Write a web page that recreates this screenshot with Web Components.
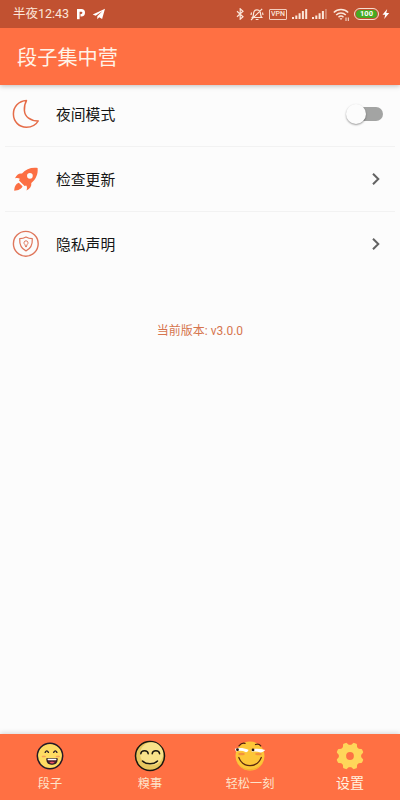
<!DOCTYPE html>
<html lang="zh-CN">
<head>
<meta charset="UTF-8">
<meta name="viewport" content="width=device-width, initial-scale=1.0">
<title>段子集中营</title>
<style>
    html, body {
        margin: 0;
        height: 100%;
    }

    body {
        font-family: Roboto, 'Noto Sans CJK SC', sans-serif;
        background-color: #fcfcfc;
        overflow: hidden;
    }
</style>
</head>
<body>

<settings-page>
    <status-bar slot="top" time="半夜12:43"></status-bar>
    <app-bar slot="top">段子集中营</app-bar>

    <setting-row>
        <svg slot="icon" width="28" height="30" viewBox="0 0 28 30" fill="none" stroke="#e56c48" stroke-width="1.5" stroke-linejoin="round">
            <path d="M14.500 1.600C6.500 2 1.300 8 1.400 15c.1 8 6 13.200 13 13.200 5.200 0 9.600-2.300 11.800-6.200C18.500 22 12.800 18 12.400 11.500 12.200 7.500 12.900 4.200 14.500 1.600z"/>
        </svg>
        夜间模式
        <toggle-switch slot="action"></toggle-switch>
    </setting-row>
    <setting-row>
        <svg slot="icon" width="28" height="28" viewBox="0 0 28 28" fill="#fc6f43">
            <path fill-rule="evenodd" d="M25.600 3C19 2.200 13.900 4.200 10 8.500 6.500 8.100 4.700 9.800 3 13.300c2-.7 3.600-.5 4.800.5L7 15.500l5.600 5.600 1.600-.7c1 1.400 1 3.100.3 5 3.700-1.700 5.200-4 4.800-7.300C24 14 26.200 9.200 25.600 3zM17.900 8a2.850 2.850 0 1 1 0 5.700 2.850 2.850 0 0 1 0-5.700z"/>
            <path d="M6.800 17.700c-2.700.8-4.500 3.700-4.600 8.100 4.200-.2 7.500-2 8.300-4.500z"/>
        </svg>
        检查更新
        <chevron-icon slot="action"></chevron-icon>
    </setting-row>
    <setting-row>
        <svg slot="icon" width="28" height="28" viewBox="0 0 28 28" fill="none" stroke="#df765b" stroke-width="1.200" stroke-linejoin="round">
            <circle cx="13.800" cy="13.800" r="12.400" stroke-width="1.400"/>
            <path d="M14 7c2 1.200 4 1.700 6.300 1.700.3 5.500-1.500 9.900-6.300 12.200-4.800-2.300-6.600-6.700-6.300-12.200 2.300 0 4.300-.5 6.300-1.700z"/>
            <path stroke-width="1" d="M14 10.800a2 2 0 0 1 1.200 3.600L14.200 17h-.4l-1-2.600A2 2 0 0 1 14 10.800z"/>
        </svg>
        隐私声明
        <chevron-icon slot="action"></chevron-icon>
    </setting-row>

    <version-label>当前版本: v3.0.0</version-label>

    <tab-bar slot="bottom">
        <tab-item>
            <svg slot="icon" width="32" height="32" viewBox="0 0 32 32" fill="none" stroke-linecap="round">
                <circle cx="16" cy="16" r="12.700" fill="#fedc62" stroke="#251a26" stroke-width="1.500"/>
                <path d="M11.200 12.300q1.600-2.800 3.200 0M19.700 12.300q1.600-2.800 3.200 0" stroke="#251a26" stroke-width="1.400"/>
                <path d="M8.500 16.500h2.600M22.500 16.500h2.600" stroke="#f4a25a" stroke-width="1.500"/>
                <path d="M12.800 18.800h10.400c0 3.400-2 5.400-5.200 5.400s-5.200-2-5.200-5.400z" fill="#58202d" stroke="#251a26" stroke-width="1.200" stroke-linejoin="round"/>
                <path d="M14.200 19.500h7.600" stroke="#fff" stroke-width="1.300"/>
                <path d="M15.300 22.500q2.700-1.600 5.400 0-2.500 1.900-5.400 0z" fill="#ef5364"/>
            </svg>
            段子
        </tab-item>
        <tab-item>
            <svg slot="icon" width="32" height="32" viewBox="0 0 32 32" fill="none" stroke="#1b180f" stroke-linecap="round">
                <circle cx="16" cy="16" r="14.500" fill="#e7c75f" stroke-width="1.500"/>
                <ellipse cx="17.600" cy="13.800" rx="11.500" ry="11.500" fill="#f8e28a" stroke="none"/>
                <path d="M6.800 13.800c.4-4 7-4 7.400 0M18.200 13.800c.4-4 7-4 7.400 0M8.500 21c3.700 3.800 11.300 3.800 15 0" stroke-width="1.500"/>
            </svg>
            糗事
        </tab-item>
        <tab-item>
            <svg slot="icon" width="32" height="32" viewBox="0 0 32 32" fill="none" stroke-linecap="round">
                <circle cx="16" cy="16" r="14.500" fill="#fdc638"/>
                <path d="M3.200 22.500a14.500 14.500 0 0 0 25.600 0c-4 5-8 6.500-12.800 6.500s-9-1.500-12.800-6.500z" fill="#f4b22f"/>
                <path d="M.8 8.800c4.500-1.300 9-.8 13.700.9-.3 1.600-1.200 2.300-2.500 2.500-3.500-1.600-6.500-1.800-10-.7zM17.300 9.500c4.500-1.200 9-.9 13.900.5-1.300 1.500-3 2.300-4.700 2.500-3-1-5.500-1.200-8.500-.6z" fill="#fff"/>
                <path d="M5 5.800C6.600 3.800 9 2.800 11 3.300M21.500 4.500c2-.7 4-.2 5.200 1.300" stroke="#50210f" stroke-width="1.300"/>
                <circle cx="3.500" cy="9.700" r="1.400" fill="#28180e"/>
                <circle cx="19" cy="9.900" r="1.400" fill="#28180e"/>
                <ellipse cx="7.500" cy="14" rx="3.300" ry="1.300" fill="#f4943c"/>
                <ellipse cx="24.500" cy="14" rx="3.300" ry="1.300" fill="#f4943c"/>
                <path d="M4.800 17.500C9 28.300 23 28.300 27.300 17.500" stroke="#5c2a10" stroke-width="1.300"/>
            </svg>
            轻松一刻
        </tab-item>
        <tab-item active>
            <svg slot="icon" width="32" height="32" viewBox="-16 -16 32 32">
                <g fill="#ffd65a">
                    <circle r="11.200"/>
                    <g id="teeth"></g>
                </g>
                <circle r="3.900" fill="#fd7044"/>
            </svg>
            设置
        </tab-item>
    </tab-bar>
</settings-page>

<script>
class SettingsPage extends HTMLElement {

    constructor() {
        super();
        this.shadow = this.attachShadow({mode: 'open'});
        this.render();
    }

    render() {
        this.shadow.innerHTML =
        /*html*/
        `
        <style>
            :host{
                display:flex;
                flex-direction: column;
                height:100vh;
            }

            main{
                flex:1;
                min-height:0;
                margin-top:-3px;
            }
        </style>

        <slot name="top"></slot>
        <main><slot></slot></main>
        <slot name="bottom"></slot>
        `;
    }
}

class StatusBar extends HTMLElement {

    constructor() {
        super();
        this.shadow = this.attachShadow({mode: 'open'});
        this.render();
    }

    render() {
        this.shadow.innerHTML =
        /*html*/
        `
        <style>
            :host{
                display:flex;
                justify-content: space-between;
                align-items: center;
                box-sizing: border-box;
                height:28px;
                padding:0 10px 0 13px;
                background-color:#c15131;
                color:#fbe6da;
                flex:none;
                z-index:2;
            }

            .side{
                display:flex;
                align-items: center;
            }

            .time{
                font-size:12.5px;
                line-height:28px;
                margin-right:7px;
            }

            .vpn{
                box-sizing: border-box;
                width:18px;
                height:11px;
                border:1px solid #f3cdbd;
                border-radius:1px;
                font-size:7px;
                font-weight:500;
                line-height:9.500px;
                text-align: center;
                margin-right:5px;
            }

            .battery{
                box-sizing: border-box;
                width:25px;
                height:12px;
                border:1px solid #f6dfd1;
                border-radius:6px;
                padding:1px;
                margin-right:3px;
            }

            .level{
                height:8px;
                border-radius:4px;
                background-color:#45aa22;
                color:white;
                font-size:7.500px;
                font-weight:700;
                line-height:8.500px;
                text-align: center;
            }

            svg{
                display:block;
            }
        </style>

        <div class="side">
            <span class="time">${this.getAttribute('time')}</span>
            <svg width="10" height="12" viewBox="0 0 10 12" fill="none" stroke="#fff">
                <path d="M2.300 11.200V3" stroke-width="2.600"/>
                <path d="M1 2.400h4.300a2.300 2.300 0 0 1 0 4.800H4.500" stroke-width="2.600"/>
            </svg>
            <svg width="14" height="12" viewBox="0 0 14 12" fill="#fff" style="margin-left:6px">
                <path d="M13 0.800L0.700 6.500l3 1.200L10.500 3 5.300 8.300v3l1.900-2 2.900 1.600z"/>
            </svg>
        </div>
        <div class="side">
            <svg width="9" height="12" viewBox="0 0 9 12" fill="none" stroke="currentColor" stroke-width="1.200" style="margin-right:5px">
                <path d="M1 3.300l6 5.400-2.800 2.500V.8L7 3.300 1 8.700"/>
            </svg>
            <svg width="14" height="13" viewBox="0 0 14 13" fill="none" stroke="currentColor" stroke-width="1.200" style="margin-right:5px">
                <path d="M2.500 9.500C4 8 3 5 4.200 3.300c1.400-2 4.300-2 5.700 0C11 5 10.200 8 11.700 9.500zM5.700 11.500h2.800M12.200.8L1 12M1 7l.5-2.500M13 7l-.5-2.500"/>
            </svg>
            <div class="vpn">VPN</div>
            <svg width="16" height="12" viewBox="0 0 16 12" fill="#fbe6da" style="margin-right:4px">
                <path d="M0 9h2v2H0zM3.300 7.500h2V11h-2zM6.600 5.300h2V11h-2zM9.900 3h2v8h-2zM13.200 1h2v10h-2z"/>
            </svg>
            <svg width="16" height="12" viewBox="0 0 16 12" fill="#fbe6da" style="margin-right:5px">
                <path d="M0 9h2v2H0zM3.300 7.500h2V11h-2zM6.600 5.300h2V11h-2zM9.900 3h2v8h-2z"/>
                <path d="M13.200 1h1.500v10h-1.500z" opacity=".45"/>
            </svg>
            <svg width="17" height="13" viewBox="0 0 17 13" fill="none" stroke="currentColor" stroke-width="1.500" style="margin-right:4px">
                <path d="M.8 4.500c4-4 10.400-4 14.400 0M3.200 7c2.700-2.700 6.900-2.700 9.600 0M5.500 9.200c1.500-1.400 3.500-1.400 5 0"/>
                <path d="M6.500 10.200h3L8 12z" fill="currentColor" stroke="none"/>
                <path d="M13 9.500V13M15.300 9.500V13" stroke-width="1"/>
            </svg>
            <div class="battery"><div class="level">100</div></div>
            <svg width="8" height="12" viewBox="0 0 8 12" fill="#fff">
                <path d="M5.200 1L.5 6.800h2.700L2.200 11l5-6H4.300z"/>
            </svg>
        </div>
        `;
    }
}

class AppBar extends HTMLElement {

    constructor() {
        super();
        this.shadow = this.attachShadow({mode: 'open'});
        this.render();
    }

    render() {
        this.shadow.innerHTML =
        /*html*/
        `
        <style>
            :host{
                display:flex;
                align-items: center;
                box-sizing: border-box;
                height:57px;
                padding:0 17px 0;
                background-color:#ff7043;
                color:#fff3e8;
                font-size:20.200px;
                font-weight:400;
                flex:none;
                z-index:1;
                box-shadow:0 1px 5px rgba(0,0,0,0.25);
            }
        </style>

        <slot></slot>
        `;
    }
}

class SettingRow extends HTMLElement {

    constructor() {
        super();
        this.shadow = this.attachShadow({mode: 'open'});
        this.render();
    }

    render() {
        this.shadow.innerHTML =
        /*html*/
        `
        <style>
            :host{
                display:flex;
                align-items: center;
                box-sizing: border-box;
                height:65px;
                margin:0 5px;
                padding:0 12px 1px 7px;
                border-bottom:1px solid #f2f2f2;
                color:#151515;
                font-size:14.800px;
            }

            :host(:last-of-type){
                border-bottom-color:transparent;
            }

            .icon{
                display:flex;
                width:44px;
            }

            .label{
                flex:1;
            }
        </style>

        <div class="icon"><slot name="icon"></slot></div>
        <div class="label"><slot></slot></div>
        <slot name="action"></slot>
        `;
    }
}

class ToggleSwitch extends HTMLElement {

    constructor() {
        super();
        this.shadow = this.attachShadow({mode: 'open'});
        this.render();
    }

    render() {
        this.shadow.innerHTML =
        /*html*/
        `
        <style>
            :host{
                display:flex;
                align-items: center;
                width:37px;
                height:20px;
            }

            .thumb{
                width:20px;
                height:20px;
                border-radius:50%;
                background-color:#fcfcfc;
                box-shadow:0 1px 2px rgba(0,0,0,0.4);
                z-index:1;
            }

            .track{
                width:27px;
                height:14px;
                margin-left:-10px;
                border-radius:7px;
                background-color:#a3a4a3;
            }
        </style>

        <div class="thumb"></div>
        <div class="track"></div>
        `;
    }
}

class ChevronIcon extends HTMLElement {

    constructor() {
        super();
        this.shadow = this.attachShadow({mode: 'open'});
        this.render();
    }

    render() {
        this.shadow.innerHTML =
        /*html*/
        `
        <style>
            :host{
                display:flex;
                padding-right:3px;
            }
        </style>

        <svg width="8" height="14" viewBox="0 0 8 14" fill="none" stroke="#636363" stroke-width="2">
            <path d="M1 1.800L6.300 7 1 12.200"/>
        </svg>
        `;
    }
}

class VersionLabel extends HTMLElement {

    constructor() {
        super();
        this.shadow = this.attachShadow({mode: 'open'});
        this.render();
    }

    render() {
        this.shadow.innerHTML =
        /*html*/
        `
        <style>
            :host{
                display:block;
                margin-top:44px;
                line-height:20px;
                text-align: center;
                font-size:12px;
                color:#d6754e;
            }
        </style>

        <slot></slot>
        `;
    }
}

class TabBar extends HTMLElement {

    constructor() {
        super();
        this.shadow = this.attachShadow({mode: 'open'});
        this.render();
    }

    render() {
        this.shadow.innerHTML =
        /*html*/
        `
        <style>
            :host{
                display:grid;
                grid-template-columns: repeat(4, 1fr);
                height:66px;
                background-color:#ff7043;
                box-shadow:0 -1px 5px rgba(0,0,0,0.15);
                flex:none;
            }
        </style>

        <slot></slot>
        `;
    }
}

class TabItem extends HTMLElement {

    constructor() {
        super();
        this.shadow = this.attachShadow({mode: 'open'});
        this.render();
    }

    render() {
        this.shadow.innerHTML =
        /*html*/
        `
        <style>
            :host{
                display:flex;
                flex-direction: column;
                align-items: center;
                padding-top:6px;
                font-size:12.200px;
                color:#fde3ca;
            }

            :host([active]){
                font-size:14px;
                color:#fff3e0;
            }

            .icon{
                display:flex;
                height:32px;
            }

            .label{
                line-height:20px;
                margin-top:2px;
            }

            :host([active]) .label{
                margin-top:1px;
            }
        </style>

        <div class="icon"><slot name="icon"></slot></div>
        <div class="label"><slot></slot></div>
        `;
    }
}

customElements.define('settings-page', SettingsPage);
customElements.define('status-bar', StatusBar);
customElements.define('app-bar', AppBar);
customElements.define('setting-row', SettingRow);
customElements.define('toggle-switch', ToggleSwitch);
customElements.define('chevron-icon', ChevronIcon);
customElements.define('version-label', VersionLabel);
customElements.define('tab-bar', TabBar);
customElements.define('tab-item', TabItem);

// eight teeth around the gear
const teeth = document.getElementById('teeth');
for (let i = 0; i < 8; i++) {
    const tooth = document.createElementNS('http://www.w3.org/2000/svg', 'path');
    tooth.setAttribute('d', 'M-3.600 -10L-2.100 -13Q-1.800 -13.700 -1.200 -13.700H1.200Q1.800 -13.700 2.100 -13L3.600 -10z');
    tooth.setAttribute('transform', `rotate(${i * 45 + 22.5})`);
    teeth.appendChild(tooth);
}
</script>
</body>
</html>
